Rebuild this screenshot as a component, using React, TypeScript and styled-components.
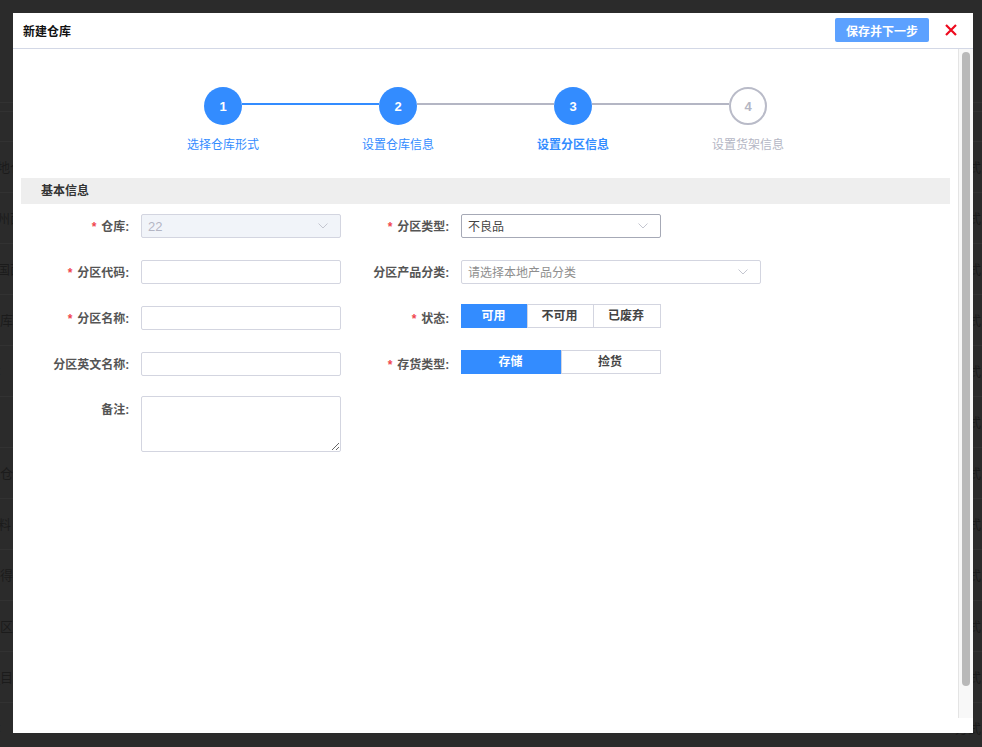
import React from "react";
import styled, { createGlobalStyle } from "styled-components";

const FONT = `"Liberation Sans", "Noto Sans CJK SC", sans-serif`;

const Global = createGlobalStyle`
  html, body { margin: 0; height: 100%; overflow: hidden; background: #2b2b2b; }
  #root { height: 100%; }
  * { box-sizing: border-box; }
`;

const Page = styled.div`
  position: relative;
  width: 982px;
  height: 747px;
  overflow: hidden;
  background: #2b2b2b;
  font-family: ${FONT};
`;

const BackHeader = styled.div<{ $h: number }>`
  height: ${(p) => p.$h}px;
  border-bottom: 1px solid #323232;
`;

const BackRow = styled.div`
  height: 51px;
  border-bottom: 1px solid #323232;
  display: flex;
  align-items: center;
  justify-content: space-between;
  padding: 0 1px 2px 0;
  color: #1b1b1b;
  font-size: 13px;
  white-space: nowrap;
`;

const BackLeft = styled.span<{ $end: number }>`
  width: ${(p) => p.$end}px;
  display: flex;
  justify-content: flex-end;
`;

const Modal = styled.div`
  position: absolute;
  left: 13px;
  top: 13px;
  width: 960px;
  height: 720px;
  background: #fff;
  display: flex;
  flex-direction: column;
`;

const ModalHeader = styled.header`
  height: 36px;
  flex: none;
  border-bottom: 1px solid #d3d8e6;
  display: flex;
  align-items: center;
  padding: 0 16px 1px 10px;
`;

const Title = styled.h1`
  margin: 0;
  flex: 1;
  font-size: 12px;
  font-weight: 700;
  color: #111;
`;

const SaveButton = styled.button`
  width: 94px;
  height: 24px;
  border: 0;
  border-radius: 2px;
  background: #5ca1ff;
  color: #fff;
  font: 700 12px ${FONT};
  padding: 0;
`;

const CloseButton = styled.button`
  width: 12px;
  height: 12px;
  margin-left: 16px;
  padding: 0;
  border: 0;
  background: none;
  display: flex;
  svg { display: block; }
`;

const ModalBody = styled.div`
  height: 669px;
  flex: none;
  display: flex;
`;

const Content = styled.main`
  flex: 1;
  min-width: 0;
  padding: 38px 8px 0;
`;

const ScrollTrack = styled.div`
  width: 15px;
  flex: none;
  background: #f8f8f8;
  border-left: 1px solid #e4e4e4;
  padding: 3px 3px 0 3px;
`;

const ScrollThumb = styled.div`
  width: 8px;
  height: 634px;
  border-radius: 4px;
  background: #b9b9b9;
`;

const Stepper = styled.div`
  display: flex;
  justify-content: center;
`;

const Step = styled.div`
  position: relative;
  width: 175px;
  display: flex;
  flex-direction: column;
  align-items: center;
`;

const Connector = styled.span<{ $done: boolean }>`
  position: absolute;
  left: 106px;
  top: 16px;
  width: 137px;
  height: 2px;
  background: ${(p) => (p.$done ? "#338cff" : "#b4b6c4")};
`;

const Circle = styled.div<{ $active: boolean }>`
  width: 38px;
  height: 38px;
  border-radius: 50%;
  display: flex;
  align-items: center;
  justify-content: center;
  font-size: 13px;
  font-weight: 700;
  background: ${(p) => (p.$active ? "#338cff" : "#fff")};
  border: ${(p) => (p.$active ? "0" : "2px solid #b9bbc8")};
  color: ${(p) => (p.$active ? "#fff" : "#b4b6c4")};
`;

const StepLabel = styled.div<{ $state: "done" | "current" | "todo" }>`
  margin-top: 11px;
  line-height: 18px;
  font-size: 12px;
  font-weight: ${(p) => (p.$state === "current" ? 700 : 400)};
  color: ${(p) => (p.$state === "todo" ? "#b4b6c4" : "#338cff")};
`;

const SectionTitle = styled.h2`
  margin: 24px 0 10px;
  height: 26px;
  line-height: 26px;
  padding-left: 20px;
  background: #eeeeee;
  color: #333;
  font-size: 12px;
  font-weight: 700;
`;

const FormGrid = styled.div`
  display: flex;
`;

const FormColumn = styled.div<{ $width: number }>`
  width: ${(p) => p.$width}px;
  flex: none;
  display: flex;
  flex-direction: column;
`;

const Field = styled.div<{ $gap?: number }>`
  display: flex;
  align-items: flex-start;
  margin-bottom: ${(p) => p.$gap ?? 22}px;
`;

const Label = styled.label<{ $top?: boolean }>`
  width: 108.3px;
  height: 24px;
  flex: none;
  margin-right: 11.7px;
  text-align: right;
  font-size: 12px;
  font-weight: 700;
  color: #555;
  line-height: ${(p) => (p.$top ? "28px" : "26px")};
  white-space: nowrap;
`;

const Star = styled.span`
  color: #f0474f;
  margin-right: 5px;
  font-weight: 700;
`;

const Input = styled.input`
  display: block;
  width: 200px;
  height: 24px;
  border: 1px solid #d3d5e0;
  border-radius: 2px;
  background: #fff;
  outline: none;
`;

const TextArea = styled.textarea`
  display: block;
  width: 200px;
  height: 56px;
  border: 1px solid #d3d5e0;
  border-radius: 2px;
  background: #fff;
  outline: none;
  padding: 4px 6px;
`;

const Select = styled.div<{ $width?: number; $disabled?: boolean; $focused?: boolean; $placeholder?: boolean }>`
  width: ${(p) => p.$width ?? 200}px;
  height: 24px;
  border: 1px solid ${(p) => (p.$focused ? "#a6a9b6" : "#d3d5e0")};
  border-radius: 2px;
  background: ${(p) => (p.$disabled ? "#f1f4f9" : "#fff")};
  color: ${(p) => (p.$disabled ? "#b4b6c4" : p.$placeholder ? "#8e8e8e" : "#444")};
  display: flex;
  align-items: center;
  justify-content: space-between;
  padding: 0 12px 0 6px;
  font-size: ${(p) => (p.$disabled ? 13 : 12)}px;
  svg { display: block; flex: none; }
`;

const SelectValue = styled.span<{ $lift?: boolean }>`
  margin-top: ${(p) => (p.$lift ? -2 : 0)}px;
`;

const Segments = styled.div`
  display: flex;
  width: 200px;
  height: 24px;
  margin: -2px 0 2px;
`;

const Segment = styled.button<{ $active?: boolean; $grow: number }>`
  flex: ${(p) => p.$grow} 1 0;
  min-width: 0;
  height: 24px;
  padding: 0 2px 4px 0;
  margin-left: -1px;
  border: 1px solid ${(p) => (p.$active ? "#338cff" : "#d3d5e0")};
  background: ${(p) => (p.$active ? "#338cff" : "#fff")};
  color: ${(p) => (p.$active ? "#fff" : "#444")};
  font: 700 12px ${FONT};
  &:first-child { margin-left: 0; }
`;

const Chevron = () => (
  <svg width="10" height="6" viewBox="0 0 10 6" fill="none">
    <path d="M0.5 0.5L5 5L9.5 0.5" stroke="#c4c6d0" strokeWidth="1" />
  </svg>
);

const leftRows: [string, number, string][] = [
  ["地仓", 23, "方式"],
  ["州面", 23, "方式"],
  ["国面", 23, "方式"],
  ["仓库", 13, "方式"],
  [":", 1, "方式"],
  ["", 1, "方式"],
  ["A仓", 13, "方式"],
  ["料", 11, "方式"],
  ["J得", 13, "方式"],
  ["K区", 13, "方式"],
  ["_目", 13, "方式"],
  [":", 1, "方式"],
];

const steps = [
  { n: 1, label: "选择仓库形式", state: "done" as const },
  { n: 2, label: "设置仓库信息", state: "done" as const },
  { n: 3, label: "设置分区信息", state: "current" as const },
  { n: 4, label: "设置货架信息", state: "todo" as const },
];

export default function App() {
  return (
    <Page>
      <Global />
      <BackHeader $h={103} />
      <BackHeader $h={9} />
      <BackHeader $h={30} />
      {leftRows.map(([l, end, r], i) => (
        <BackRow key={i}>
          <BackLeft $end={end}>{l}</BackLeft>
          <span>{r}</span>
        </BackRow>
      ))}
      <Modal>
        <ModalHeader>
          <Title>新建仓库</Title>
          <SaveButton>保存并下一步</SaveButton>
          <CloseButton aria-label="关闭">
            <svg width="12" height="12" viewBox="0 0 12 12" fill="none">
              <path d="M1 1L11 11M11 1L1 11" stroke="#ee0a1e" strokeWidth="2.2" />
            </svg>
          </CloseButton>
        </ModalHeader>
        <ModalBody>
          <Content>
            <Stepper>
              {steps.map((s, i) => (
                <Step key={s.n}>
                  {i < 3 && <Connector $done={i === 0} />}
                  <Circle $active={s.state !== "todo"}>{s.n}</Circle>
                  <StepLabel $state={s.state}>{s.label}</StepLabel>
                </Step>
              ))}
            </Stepper>
            <SectionTitle>基本信息</SectionTitle>
            <FormGrid>
              <FormColumn $width={320}>
                <Field>
                  <Label><Star>*</Star>仓库:</Label>
                  <Select $disabled><SelectValue>22</SelectValue><Chevron /></Select>
                </Field>
                <Field>
                  <Label><Star>*</Star>分区代码:</Label>
                  <Input />
                </Field>
                <Field>
                  <Label><Star>*</Star>分区名称:</Label>
                  <Input />
                </Field>
                <Field $gap={20}>
                  <Label>分区英文名称:</Label>
                  <Input />
                </Field>
                <Field>
                  <Label $top>备注:</Label>
                  <TextArea />
                </Field>
              </FormColumn>
              <FormColumn $width={500}>
                <Field>
                  <Label><Star>*</Star>分区类型:</Label>
                  <Select $focused><SelectValue $lift>不良品</SelectValue><Chevron /></Select>
                </Field>
                <Field>
                  <Label>分区产品分类:</Label>
                  <Select $width={300} $placeholder><SelectValue $lift>请选择本地产品分类</SelectValue><Chevron /></Select>
                </Field>
                <Field>
                  <Label><Star>*</Star>状态:</Label>
                  <Segments>
                    <Segment $active $grow={67}>可用</Segment>
                    <Segment $grow={67}>不可用</Segment>
                    <Segment $grow={68}>已废弃</Segment>
                  </Segments>
                </Field>
                <Field>
                  <Label><Star>*</Star>存货类型:</Label>
                  <Segments>
                    <Segment $active $grow={101}>存储</Segment>
                    <Segment $grow={100}>捡货</Segment>
                  </Segments>
                </Field>
              </FormColumn>
            </FormGrid>
          </Content>
          <ScrollTrack>
            <ScrollThumb />
          </ScrollTrack>
        </ModalBody>
      </Modal>
    </Page>
  );
}
